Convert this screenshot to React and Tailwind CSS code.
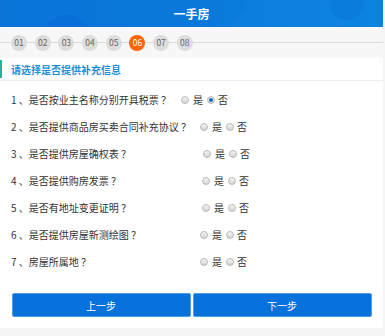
const steps = ['01', '02', '03', '04', '05', '06', '07', '08']

const questions = [
  { text: '1 、是否按业主名称分别开具税票 ？', w: 'w-[170px]', value: 'no' },
  { text: '2 、是否提供商品房买卖合同补充协议 ？', w: 'w-[189px]' },
  { text: '3 、是否提供房屋确权表 ？', w: 'w-[192px]' },
  { text: '4 、是否提供购房发票 ？', w: 'w-[191px]' },
  { text: '5 、是否有地址变更证明 ？', w: 'w-[191px]' },
  { text: '6 、是否提供房屋新测绘图 ？', w: 'w-[189px]' },
  { text: '7 、房屋所属地 ？', w: 'w-[189px]' },
]

function Radio({ checked }) {
  return (
    <span className="w-[8px] h-[8px] rounded-full border border-[#b9b9b9] bg-gradient-to-b from-[#f4f4f4] to-[#d4d4d4] flex items-center justify-center shrink-0">
      {checked && <span className="w-[4px] h-[4px] rounded-full bg-[#1b6fc6]" />}
    </span>
  )
}

export default function App() {
  return (
    <div className="w-[385px] h-[336px] bg-[#f5f5f5] overflow-hidden" style={{ fontFamily: '"Noto Sans CJK SC", "Liberation Sans", sans-serif' }}>
      <div className="w-[383px] bg-white">

        {/* Header */}
        <div className="relative h-[27px] overflow-hidden bg-gradient-to-r from-[#0a74d9] via-[#0a78db] to-[#0a84e0] flex items-center justify-center">
          <span className="absolute left-[43px] top-[15px] w-[48px] h-[48px] rounded-full bg-[#086ed8]" />
          <span className="absolute left-[250px] -top-[40px] w-[90px] h-[110px] rotate-[35deg] bg-[#1a86e4] opacity-30" />
          <span className="absolute left-[330px] -top-[14px] w-[34px] h-[34px] rounded-full bg-[#0a7cdb]" />
          <span className="relative text-white text-[12px] font-bold">一手房</span>
        </div>

        {/* Steps */}
        <div className="relative h-[31px] bg-[#f7f7f7] flex items-center pl-[11px]">
          <span className="absolute left-0 right-0 top-[15px] h-px bg-[#dcdcdc]" />
          <div className="relative flex gap-[7.7px]">
            {steps.map((s) => (
              <span
                key={s}
                className={
                  s === '06'
                    ? 'w-[16px] h-[16px] rounded-full bg-[#ff6600] text-white text-[8.5px] flex items-center justify-center'
                    : 'w-[16px] h-[16px] rounded-full bg-[#dddddd] text-[#666] text-[8.5px] flex items-center justify-center'
                }
              >
                {s}
              </span>
            ))}
          </div>
        </div>

        {/* Section title */}
        <div className="h-[23px] border-b border-[#ececec] flex items-center">
          <span className="w-[2px] h-[18px] bg-[#1fb39a]" />
          <span className="pl-[9px] text-[10px] font-bold text-[#1e8fd9]">请选择是否提供补充信息</span>
        </div>

        {/* Questions */}
        <div className="pt-[5px]">
          {questions.map((q) => (
            <div key={q.text} className="h-[27px] flex items-center pl-[11px] text-[10px] text-[#333]">
              <span className={q.w + ' shrink-0 whitespace-pre'}>{q.text}</span>
              <Radio checked={q.value === 'yes'} />
              <span className="ml-[4px]">是</span>
              <span className="ml-[4px]"><Radio checked={q.value === 'no'} /></span>
              <span className="ml-[3px]">否</span>
            </div>
          ))}
        </div>

        {/* Buttons */}
        <div className="flex gap-[2px] px-[11.5px] pt-[18px] pb-[11px]">
          <button className="flex-1 h-[24px] rounded-[2px] border border-[#4b9be6] bg-[#0872dc] text-white text-[10px]">上一步</button>
          <button className="flex-1 h-[24px] rounded-[2px] border border-[#4b9be6] bg-[#0872dc] text-white text-[10px]">下一步</button>
        </div>
      </div>
    </div>
  )
}
